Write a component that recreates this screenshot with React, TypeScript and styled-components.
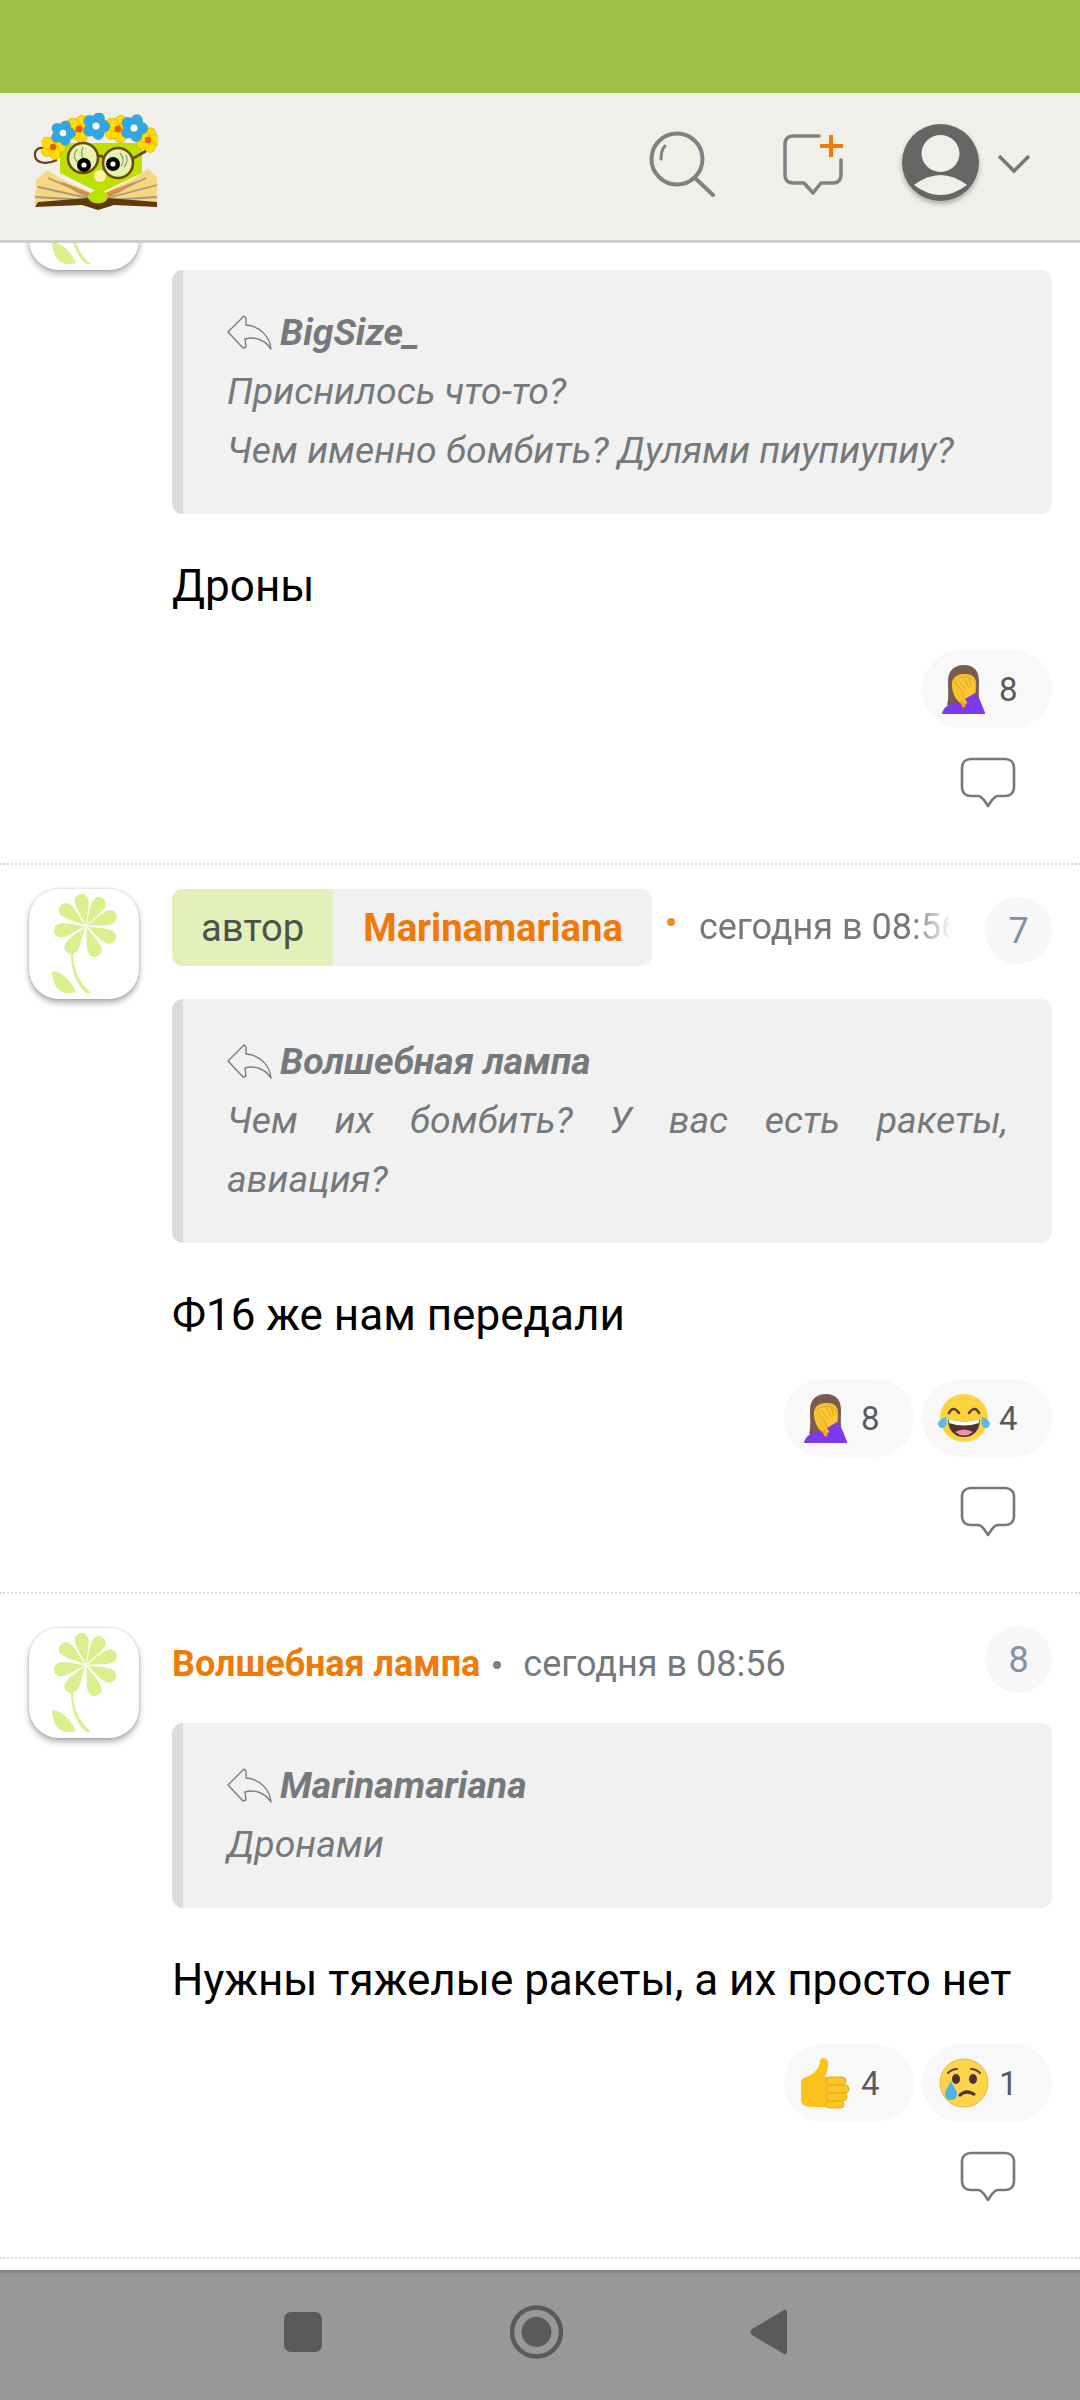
import React from "react";
import styled, { createGlobalStyle } from "styled-components";

const Global = createGlobalStyle`
  html, body { margin: 0; padding: 0; background: #fff; }
  body { font-family: Roboto, "Noto Sans", sans-serif; }
  * { box-sizing: border-box; }
`;

const Screen = styled.div`
  width: 1080px;
  height: 2400px;
  display: flex;
  flex-direction: column;
  overflow: hidden;
  background: #fff;
`;
const StatusBar = styled.div`
  height: 93px;
  flex: none;
  background: #9dc045;
`;
const Header = styled.header`
  height: 150px;
  flex: none;
  position: relative;
  z-index: 2;
  background: #eff0e9;
  border-bottom: 3px solid #cdcdcd;
  display: flex;
  align-items: flex-start;
  justify-content: space-between;
  padding: 20px 50px 0 34px;
`;
const LogoWrap = styled.div`
  width: 124px;
  height: 100px;
  flex: none;
`;
const HeaderTools = styled.div`
  display: flex;
  align-items: flex-start;
`;
const ToolButton = styled.div<{ $w: number; $top: number; $right: number }>`
  width: ${(p) => p.$w}px;
  margin-top: ${(p) => p.$top}px;
  margin-right: ${(p) => p.$right}px;
  line-height: 0;
`;
const UserAvatar = styled.div`
  width: 77px;
  height: 77px;
  border-radius: 50%;
  margin-top: 11px;
  background: #666;
  box-shadow: 0 3px 5px rgba(0, 0, 0, 0.28);
  overflow: hidden;
  line-height: 0;
`;
const Chevron = styled.div`
  width: 32px;
  margin: 41px 0 0 19px;
  line-height: 0;
`;
const Feed = styled.main`
  flex: 1;
  min-height: 0;
  overflow: hidden;
`;
const FeedInner = styled.div`
  margin-top: -107px;
`;
const CommentBox = styled.article`
  padding: 24px 28px 0 29px;
  border-bottom: 2px dotted #dcdcdc;
  display: grid;
  grid-template-columns: 110px 1fr;
  column-gap: 33px;
`;
const AvatarTile = styled.div<{ $top: number }>`
  width: 110px;
  height: 110px;
  margin-top: ${(p) => p.$top}px;
  border-radius: 30px;
  background: #fff;
  box-shadow: 0 4px 6px rgba(0, 0, 0, 0.3), 0 0 3px rgba(0, 0, 0, 0.18);
  line-height: 0;
`;
const Main = styled.div`
  min-width: 0;
`;
const Head = styled.div<{ $h: number }>`
  height: ${(p) => p.$h}px;
  margin-bottom: 33px;
  display: flex;
  align-items: flex-start;
`;
const AuthorPill = styled.div`
  display: flex;
  height: 77px;
  flex: none;
  border-radius: 11px;
  overflow: hidden;
  background: #f1f1f1;
  align-items: center;
`;
const AuthorTag = styled.span`
  height: 100%;
  padding: 0 29px;
  display: flex;
  align-items: center;
  background: #e2f0ba;
  color: #4e524c;
  font-size: 38.2px;
`;
const AuthorName = styled.span`
  padding: 0 29px 0 30px;
  color: #ef7a08;
  font-size: 38.2px;
  font-weight: 700;
`;
const PlainName = styled.span`
  margin-top: 23px;
  line-height: 46px;
  color: #ef7a08;
  font-size: 36px;
  font-weight: 700;
  flex: none;
`;
const Dot = styled.i<{ $orange?: boolean; $gap: number }>`
  width: 8px;
  height: 8px;
  flex: none;
  border-radius: 50%;
  background: ${(p) => (p.$orange ? "#f08c2c" : "#7c8083")};
  margin: ${(p) => (p.$orange ? "29px" : "43px")} ${(p) => p.$gap}px 0 ${(p) => (p.$orange ? 15 : 13)}px;
`;
const Time = styled.span<{ $fade?: boolean; $top: number }>`
  flex: ${(p) => (p.$fade ? "0 0 253px" : "0 0 auto")};
  margin-top: ${(p) => p.$top}px;
  line-height: 46px;
  color: #75797c;
  font-size: 36px;
  white-space: nowrap;
  overflow: hidden;
  ${(p) =>
    p.$fade &&
    "mask-image: linear-gradient(to right, #000 84%, transparent 100%);"}
`;
const NumberBadge = styled.span`
  margin: 8px 0 0 auto;
  width: 67px;
  height: 67px;
  flex: none;
  border-radius: 50%;
  background: #f7f7f8;
  color: #8490a8;
  font-size: 36px;
  display: flex;
  align-items: center;
  justify-content: center;
`;
const Quote = styled.blockquote`
  margin: 0;
  padding: 33px 44px 34px;
  background: #f1f1f1;
  border-left: 11px solid #dcdcdc;
  border-radius: 11px;
  color: #75797c;
  font-size: 37.4px;
  line-height: 59px;
  font-style: italic;
`;
const QuoteAuthor = styled.div`
  display: flex;
  align-items: center;
  font-weight: 700;
  height: 59px;
`;
const ReplyGlyph = styled.span`
  width: 46px;
  margin-right: 7px;
  flex: none;
  line-height: 0;
`;
const QuoteLine = styled.div<{ $just?: boolean }>`
  white-space: nowrap;
  text-align: ${(p) => (p.$just ? "justify" : "left")};
  text-align-last: ${(p) => (p.$just ? "justify" : "left")};
`;
const Body = styled.p`
  margin: 39px 0 0;
  font-size: 44px;
  line-height: 66px;
  color: #000;
`;
const Reactions = styled.div`
  margin-top: 31px;
  display: flex;
  justify-content: flex-end;
  gap: 8px;
`;
const ReactionPill = styled.div`
  width: 130px;
  height: 78px;
  border-radius: 39px;
  background: #f8f8f8;
  display: flex;
  align-items: center;
  color: #585b5d;
  font-size: 33px;
  padding-left: 16px;
`;
const EmojiBox = styled.span`
  width: 52px;
  height: 52px;
  flex: none;
  margin-right: 9px;
  line-height: 0;
`;
const ReplyRow = styled.div`
  display: flex;
  justify-content: flex-end;
  margin-top: 29px;
  padding: 0 36px 54px 0;
  line-height: 0;
`;
const NavBar = styled.nav`
  position: relative;
  z-index: 2;
  height: 130px;
  flex: none;
  background: #98989a;
  border-top: 3px solid #87878b;
  display: grid;
  grid-template-columns: 284px 38px 188px 53px 187px 37px;
  align-items: start;
  padding-top: 36px;
`;
const NavSlot = styled.div<{ $col: number; $top: number }>`
  grid-column: ${(p) => p.$col};
  margin-top: ${(p) => p.$top}px;
  line-height: 0;
`;

const Flower = () => (
  <svg width="110" height="110" viewBox="0 0 110 110">
    <g fill="#d8f08e">
      {[-10, 30, 70, 115, 160, 215, 260, 308].map((a) => (
        <path
          key={a}
          transform={`rotate(${a} 57 37)`}
          d="M57 36 C55.5 30 50 18 50 12 C50 2 64 2 64 12 C64 18 58.5 30 57 36Z"
        />
      ))}
      <path d="M44 64 C44 80 50 94 62 104 L57 104 C47 95 42 82 42 64Z" />
      <path d="M23 82 C36 84 43 94 47 103 C37 106 24 104 23 82Z" />
    </g>
  </svg>
);

const Petals = ({ x, y, fill, core, r = 9 }: { x: number; y: number; fill: string; core: string; r?: number }) => (
  <g>
    {[0, 72, 144, 216, 288].map((a) => (
      <ellipse key={a} cx={x} cy={y - r * 0.62} rx={r * 0.56} ry={r * 0.66} fill={fill} stroke="#b88a10" strokeWidth="0.4" transform={`rotate(${a + 20} ${x} ${y})`} />
    ))}
    <circle cx={x} cy={y} r={r * 0.32} fill={core} />
  </g>
);

const Logo = () => (
  <svg width="124" height="100" viewBox="0 0 124 100">
    <path d="M26 30 H108 V60 L66 80 L26 60Z" fill="#bde000" />
    <path d="M23 47 C12 52 2 50 1 43 C0 37 5 34 9 35" fill="none" stroke="#6a3f10" strokeWidth="2.2" />
    <Petals x={19} y={34} fill="#ffdd00" core="#f05a10" r={10} />
    <Petals x={45} y={16} fill="#ffdd00" core="#f05a10" r={11} />
    <Petals x={84} y={16} fill="#ffdd00" core="#f05a10" r={11} />
    <Petals x={114} y={27} fill="#ffdd00" core="#f05a10" r={10} />
    <Petals x={29} y={20} fill="#2aa8f0" core="#fff" r={10} />
    <Petals x={62} y={13} fill="#2aa8f0" core="#fff" r={11} />
    <Petals x={100} y={15} fill="#2aa8f0" core="#fff" r={11} />
    <circle cx="49" cy="45" r="15" fill="#e6f2ae" stroke="#6b4a10" strokeWidth="2.6" />
    <circle cx="84" cy="50" r="15" fill="#e6f2ae" stroke="#6b4a10" strokeWidth="2.6" />
    <path d="M64 44 Q68 41 70 46 M98 46 L112 38" fill="none" stroke="#6b4a10" strokeWidth="2.6" />
    <path d="M43 36 C38 43 41 48 45 50 M49 34 C46 40 48 45 51 47 M86 40 C90 44 90 50 87 53 M92 42 C95 47 92 52 90 54" fill="none" stroke="#8f9a6c" strokeWidth="1.2" />
    <circle cx="50" cy="52" r="7" fill="#000" /><circle cx="50" cy="52" r="2.6" fill="#fff" />
    <circle cx="79" cy="51" r="7" fill="#000" /><circle cx="79" cy="51" r="2.6" fill="#fff" />
    <circle cx="66" cy="63" r="6" fill="#fff3a8" />
    <path d="M64 84 C46 74 30 70 14 57 L2 67 L1 92 L64 92Z" fill="#f9d680" />
    <path d="M64 84 C80 74 98 70 114 55 L123 65 L123 92 L64 92Z" fill="#f9d680" />
    <path d="M64 84 C50 76 38 73 26 68 C40 80 52 84 62 87Z M64 84 C78 76 90 73 102 68 C88 80 76 84 66 87Z" fill="#f08f30" />
    <path d="M56 83 L14 65 M54 85 L4 74 M54 87 L1 84 M74 83 L112 65 M74 85 L123 72 M74 87 L123 84" stroke="#a39a80" strokeWidth="1.8" fill="none" />
    <path d="M1 94 L4 89 L54 85 L74 85 L123 89 V94 L80 92 L64 97 L48 92Z" fill="#5e3a08" />
    <ellipse cx="64" cy="84" rx="10" ry="6.5" fill="#bfe000" />
  </svg>
);

const SearchIcon = () => (
  <svg viewBox="0 0 66 66" width="66" height="66" fill="none" stroke="#7f8285" strokeLinecap="round">
    <circle cx="28" cy="28" r="25.5" strokeWidth="4" />
    <path d="M46 47 L64 64" strokeWidth="4" />
    <path d="M12 28 C12 21 14 17 16 15" strokeWidth="3" />
  </svg>
);

const NewCommentIcon = () => (
  <svg viewBox="0 0 62 62" width="62" height="62" fill="none" strokeLinecap="round">
    <path d="M36 3 H10 C5 3 2 6 2 11 V42 C2 47 5 50 10 50 H21 L30 60 L38 50 H50 C55 50 58 47 58 42 V27" stroke="#7f8285" strokeWidth="3.6" strokeLinejoin="round" />
    <path d="M48 2 V24 M37 13 H60" stroke="#ef7a08" strokeWidth="4" strokeLinecap="butt" />
  </svg>
);

const ReplyBubble = () => (
  <svg width="56" height="52" viewBox="0 0 56 52" fill="none" stroke="#75797c" strokeWidth="2.6" strokeLinejoin="round">
    <path d="M11 2 H45 C50 2 54 5 54 11 V30 C54 36 50 39 45 39 H38 C35 39 34 41 32 43 L28 49 L24 43 C22 41 21 39 18 39 H11 C6 39 2 36 2 30 V11 C2 5 6 2 11 2Z" />
  </svg>
);

const ReplyArrow = () => (
  <svg width="46" height="35" viewBox="0 0 46 35" fill="none" stroke="#7a7d80" strokeWidth="1.4" strokeLinejoin="round">
    <path d="M17 1 L1 17 L16 33 L19 32 L18 24 C28 21 38 25 44 34 C43 22 33 11 19 10 L19 3Z" />
  </svg>
);

const Facepalm = () => (
  <svg width="52" height="52" viewBox="0 0 52 52">
    <path d="M9 42 C11 36 10 26 10 18 C10 6 18 2 26 2 C35 2 41 7 41 18 C41 26 40 36 43 42Z" fill="#7b5a50" />
    <path d="M4 51 C5 44 11 41 17 40 L36 40 C42 41 46 45 47 51Z" fill="#7c3aed" />
    <path d="M14 24 C13 12 22 11 27 11 C36 11 39 16 38 25 C38 33 32 41 26 41 C20 41 15 33 14 24Z" fill="#fbc02d" />
    <path d="M25 29 L17 19 L21 15 L30 14 L35 17 L38 23 L37 31 L32 38 L27 36Z" fill="#fdc735" stroke="#d9981a" strokeWidth="0.7" />
    <path d="M21 18 L28 27 M26 15 L31 25 M31 15 L34 24" stroke="#d9981a" strokeWidth="0.8" fill="none" />
    <path d="M37 30 L27 36 L36 51 L47 51 C45 43 41 34 37 30Z" fill="#7c3aed" />
    <path d="M25 37 L28 43 L25 45 L22 39Z" fill="#f3a81f" />
  </svg>
);

const Joy = () => (
  <svg width="52" height="52" viewBox="0 0 52 52">
    <circle cx="26" cy="26" r="24" fill="#fcd33f" />
    <path d="M11 21 Q15 13 21 21 M31 21 Q37 13 41 21" fill="none" stroke="#5d4037" strokeWidth="2.6" strokeLinecap="round" />
    <path d="M10 27 Q26 32 42 27 C42 39 35 45 26 45 C17 45 10 39 10 27Z" fill="#4e342e" />
    <path d="M10.5 27 Q26 32 41.5 27 L41 31 Q26 36 11 31Z" fill="#fff" />
    <path d="M17 40 Q26 35 35 40 Q26 47 17 40Z" fill="#f48fb1" />
    <path d="M0 32 C0 29 4 26 8 25 C10 30 8 36 4 36 C2 36 0 34 0 32Z M52 32 C52 29 48 26 44 25 C42 30 44 36 48 36 C50 36 52 34 52 32Z" fill="#5cb8ec" />
  </svg>
);

const Thumb = () => (
  <svg width="52" height="52" viewBox="0 0 52 52">
    <path d="M1 25 C1 22 5 20 9 19 C15 16 19 11 20 4 C21 0 27 0 28 5 C29 11 26 16 25 20 L34 20 L34 50 L12 50 C5 50 1 48 1 42Z" fill="#fcc21b" />
    <g fill="#fdc428" stroke="#e9a81a" strokeWidth="1">
      <rect x="26" y="20" width="20" height="8" rx="4" />
      <rect x="26" y="28" width="23" height="8" rx="4" />
      <rect x="26" y="36" width="21" height="8" rx="4" />
      <rect x="26" y="44" width="18" height="7" rx="3.5" />
    </g>
  </svg>
);

const Cry = () => (
  <svg width="52" height="52" viewBox="0 0 52 52">
    <circle cx="26" cy="26" r="24" fill="#fcd54a" stroke="#eeb04a" strokeWidth="1" />
    <path d="M10 16 Q14 12 19 12 M33 12 Q38 12 42 16" fill="none" stroke="#5d4037" strokeWidth="2.2" strokeLinecap="round" />
    <ellipse cx="18" cy="22" rx="4" ry="5" fill="#4e342e" />
    <ellipse cx="35" cy="22" rx="4" ry="5" fill="#4e342e" />
    <path d="M20 38 Q28 29 38 37 L36 39 Q28 34 22 40Z" fill="#4e342e" />
    <path d="M13 24 C15 29 19 33 19 37 C19 41 16 43 13 43 C10 43 7 41 7 37 C7 33 11 29 13 24Z" fill="#4fb3e8" />
  </svg>
);

type Reaction = { icon: React.ReactNode; n: number };

const Reply = () => (
  <ReplyRow>
    <ReplyBubble />
  </ReplyRow>
);

const ReactionList = ({ items }: { items: Reaction[] }) => (
  <Reactions>
    {items.map((r, i) => (
      <ReactionPill key={i}>
        <EmojiBox>{r.icon}</EmojiBox>
        {r.n}
      </ReactionPill>
    ))}
  </Reactions>
);

const QuoteBlock = ({ author, lines, justifyFirst }: { author: string; lines: string[]; justifyFirst?: boolean }) => (
  <Quote>
    <QuoteAuthor>
      <ReplyGlyph><ReplyArrow /></ReplyGlyph>
      {author}
    </QuoteAuthor>
    {lines.map((l, i) => (
      <QuoteLine key={l} $just={justifyFirst && i === 0}>{l}</QuoteLine>
    ))}
  </Quote>
);

export default function App() {
  return (
    <Screen>
      <Global />
      <StatusBar />
      <Header>
        <LogoWrap><Logo /></LogoWrap>
        <HeaderTools>
          <ToolButton $w={66} $top={18} $right={68}><SearchIcon /></ToolButton>
          <ToolButton $w={62} $top={20} $right={57}><NewCommentIcon /></ToolButton>
          <UserAvatar>
            <svg width="77" height="77" viewBox="0 0 77 77">
              <ellipse cx="38.5" cy="29.5" rx="19" ry="18.5" fill="#eff0e9" />
              <path d="M12 61 Q38.5 41 65 61 Q38.5 81 12 61Z" fill="#eff0e9" />
            </svg>
          </UserAvatar>
          <Chevron>
            <svg width="32" height="20" viewBox="0 0 32 20" fill="none" stroke="#75797c" strokeWidth="3.6">
              <path d="M1 2 L16 17 L31 2" />
            </svg>
          </Chevron>
        </HeaderTools>
      </Header>
      <Feed>
        <FeedInner>
          <CommentBox>
            <AvatarTile $top={0}><Flower /></AvatarTile>
            <Main>
              <Head $h={77} />
              <QuoteBlock author="BigSize_" lines={["Приснилось что-то?", "Чем именно бомбить? Дулями пиупиупиу?"]} />
              <Body>Дроны</Body>
              <ReactionList items={[{ icon: <Facepalm />, n: 8 }]} />
              <Reply />
            </Main>
          </CommentBox>
          <CommentBox>
            <AvatarTile $top={0}><Flower /></AvatarTile>
            <Main>
              <Head $h={77}>
                <AuthorPill>
                  <AuthorTag>автор</AuthorTag>
                  <AuthorName>Marinamariana</AuthorName>
                </AuthorPill>
                <Dot $orange $gap={24} />
                <Time $fade $top={15}>сегодня в 08:56</Time>
                <NumberBadge>7</NumberBadge>
              </Head>
              <QuoteBlock author="Волшебная лампа" justifyFirst lines={["Чем их бомбить? У вас есть ракеты,", "авиация?"]} />
              <Body>Ф16 же нам передали</Body>
              <ReactionList items={[{ icon: <Facepalm />, n: 8 }, { icon: <Joy />, n: 4 }]} />
              <Reply />
            </Main>
          </CommentBox>
          <CommentBox>
            <AvatarTile $top={10}><Flower /></AvatarTile>
            <Main>
              <Head $h={72}>
                <PlainName>Волшебная лампа</PlainName>
                <Dot $gap={22} />
                <Time $top={23}>сегодня в 08:56</Time>
                <NumberBadge>8</NumberBadge>
              </Head>
              <QuoteBlock author="Marinamariana" lines={["Дронами"]} />
              <Body>Нужны тяжелые ракеты, а их просто нет</Body>
              <ReactionList items={[{ icon: <Thumb />, n: 4 }, { icon: <Cry />, n: 1 }]} />
              <Reply />
            </Main>
          </CommentBox>
        </FeedInner>
      </Feed>
      <NavBar>
        <NavSlot $col={2} $top={3}>
          <svg width="38" height="40" viewBox="0 0 38 40"><rect width="38" height="40" rx="7" fill="#5a5a5a" /></svg>
        </NavSlot>
        <NavSlot $col={4} $top={-4}>
          <svg width="53" height="54" viewBox="0 0 53 54">
            <circle cx="26.5" cy="27" r="24.5" fill="none" stroke="#5a5a5a" strokeWidth="4.5" />
            <circle cx="26.5" cy="27" r="15" fill="#5a5a5a" />
          </svg>
        </NavSlot>
        <NavSlot $col={6} $top={0}>
          <svg width="37" height="46" viewBox="0 0 37 46"><path d="M34 1 Q37 0 37 4 V42 Q37 46 34 45 L2 26 Q-1 23 2 20Z" fill="#5a5a5a" /></svg>
        </NavSlot>
      </NavBar>
    </Screen>
  );
}
